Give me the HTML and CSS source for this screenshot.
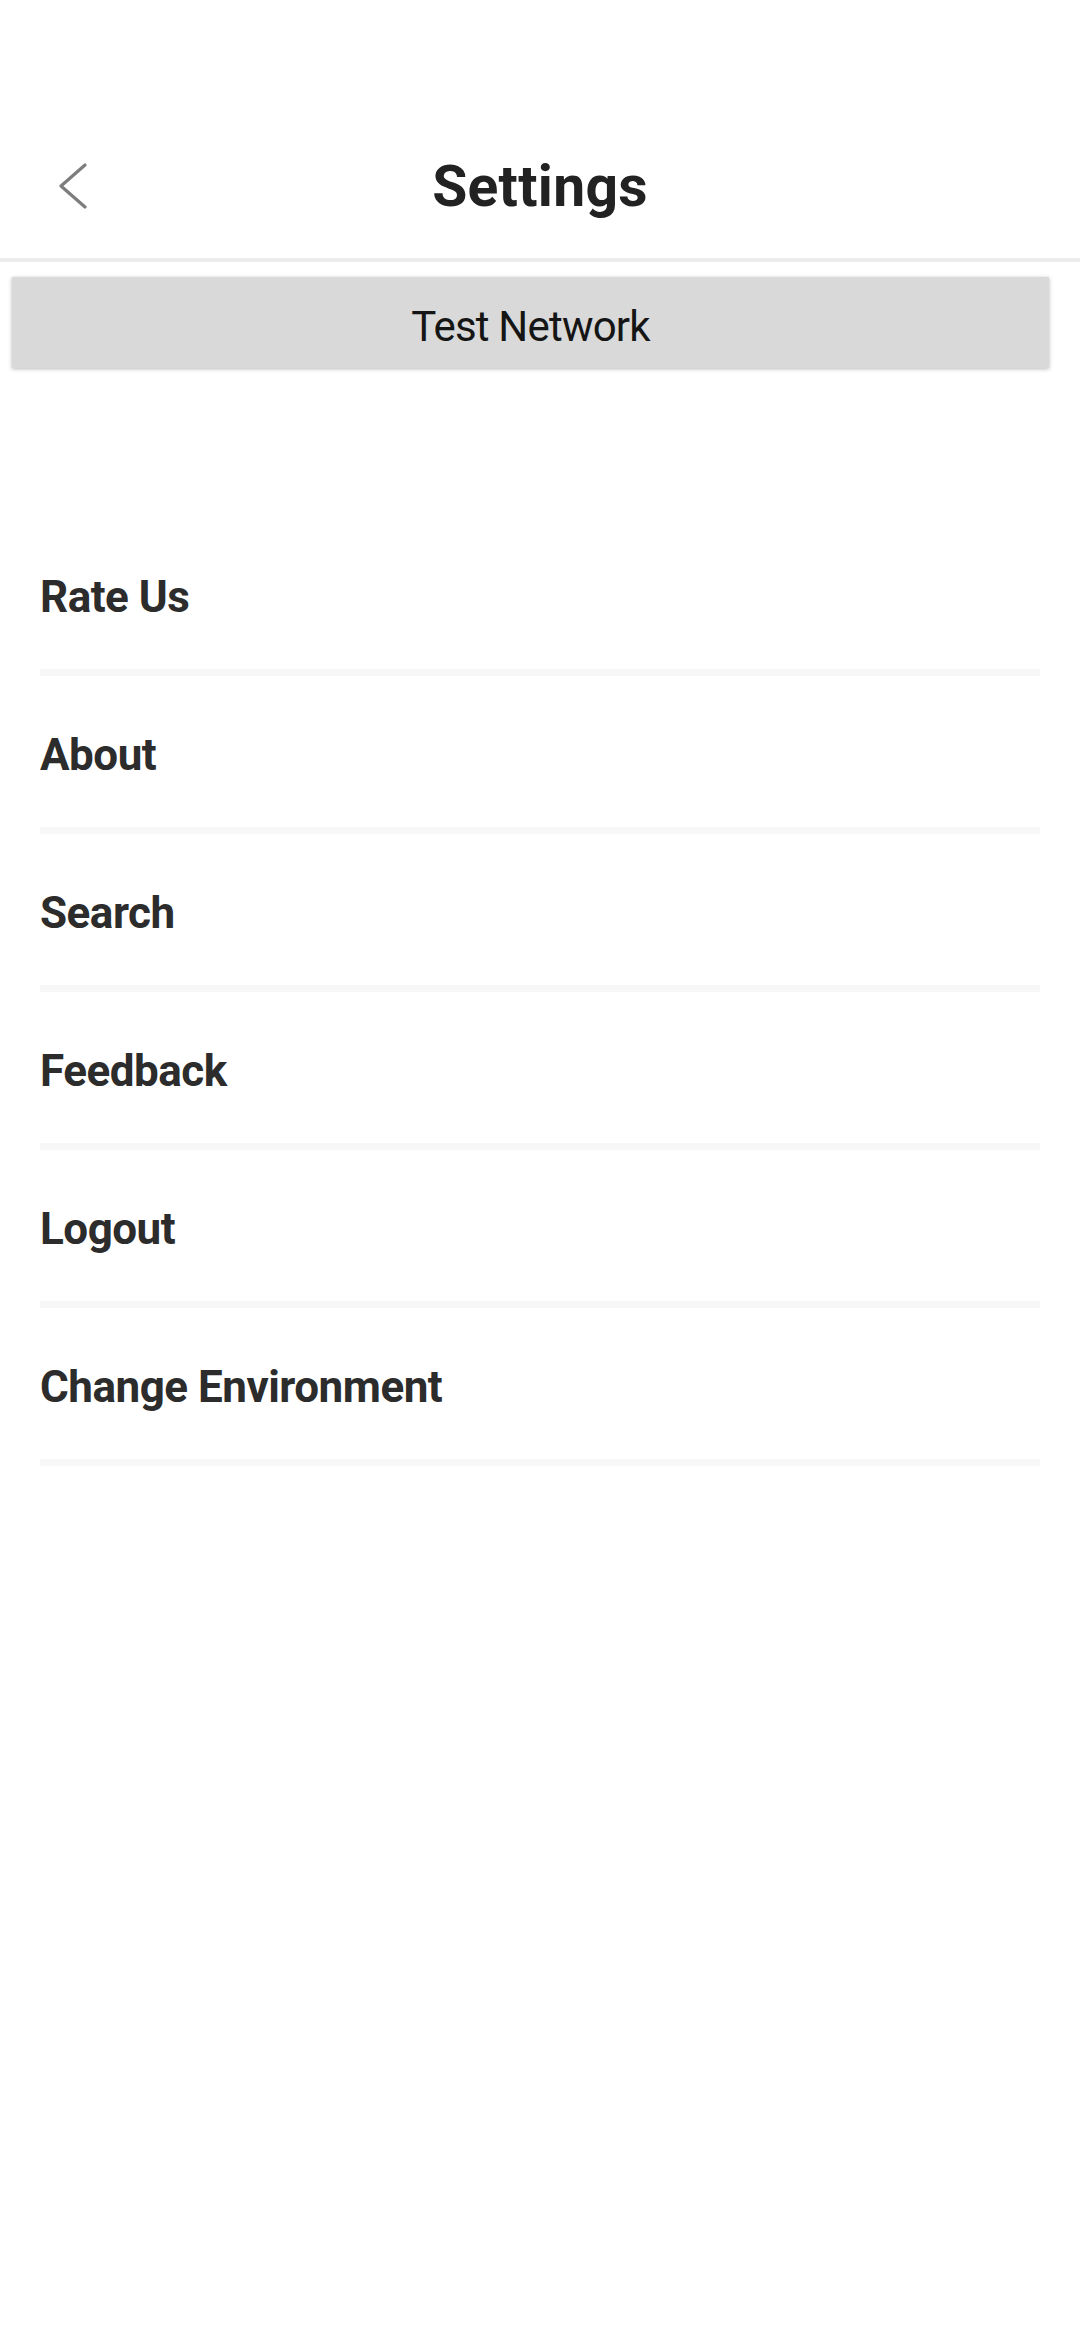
FILE: index.html
```html
<!DOCTYPE html>
<html lang="en">
<head>
<meta charset="utf-8">
<title>Settings</title>
<link rel="stylesheet" href="styles.css">
</head>
<body>
<div class="screen">
  <header class="header">
    <div class="status"></div>
    <nav class="nav">
      <div class="nav-left">
        <svg class="back" width="30" height="48" viewBox="0 0 30 48" aria-hidden="true">
          <polyline points="27,2 3,23 27,44" fill="none" stroke="#7d7d7d" stroke-width="3.2" stroke-linecap="round" stroke-linejoin="round"/>
        </svg>
      </div>
      <h1 class="title">Settings</h1>
      <div class="nav-right"></div>
    </nav>
  </header>
  <div class="btn-wrap">
    <button class="test-btn">Test Network</button>
  </div>
  <ul class="menu">
    <li class="menu-item">Rate Us</li>
    <li class="menu-item">About</li>
    <li class="menu-item">Search</li>
    <li class="menu-item">Feedback</li>
    <li class="menu-item">Logout</li>
    <li class="menu-item">Change Environment</li>
  </ul>
</div>
</body>
</html>
```
FILE: styles.css
```css
html, body {
  margin: 0;
  padding: 0;
  background: #ffffff;
}
body {
  font-family: Roboto, "Liberation Sans", Arial, sans-serif;
  width: 1080px;
  min-height: 2340px;
}
.screen {
  width: 1080px;
}
.header {
  border-bottom: 4px solid #ececec;
}
.status {
  height: 116px;
}
.nav {
  height: 142px;
  display: grid;
  grid-template-columns: 1fr auto 1fr;
  align-items: center;
}
.nav-left {
  display: flex;
  align-items: center;
  padding-left: 58px;
}
.back {
  display: block;
}
.title {
  margin: 0;
  font-size: 57px;
  line-height: 142px;
  font-weight: 700;
  color: #222222;
  letter-spacing: 0.3px;
}
.btn-wrap {
  padding: 15px 31px 0 12px;
}
.test-btn {
  display: block;
  width: 100%;
  height: 91px;
  margin: 0;
  border: none;
  border-radius: 0;
  background: #d9d9d9;
  box-shadow: 0 1px 4px rgba(0, 0, 0, 0.28);
  padding: 8px 0 0 0;
  font-family: Roboto, "Liberation Sans", Arial, sans-serif;
  font-size: 42px;
  line-height: 83px;
  font-weight: 400;
  letter-spacing: -0.8px;
  color: #151515;
  text-align: center;
}
.menu {
  list-style: none;
  margin: 150px 40px 0 40px;
  padding: 0;
}
.menu-item {
  padding: 53px 0 46px 0;
  font-size: 44px;
  line-height: 52px;
  font-weight: 700;
  letter-spacing: -0.5px;
  color: #2c2c2c;
  border-bottom: 7px solid #f7f7f7;
}
```
